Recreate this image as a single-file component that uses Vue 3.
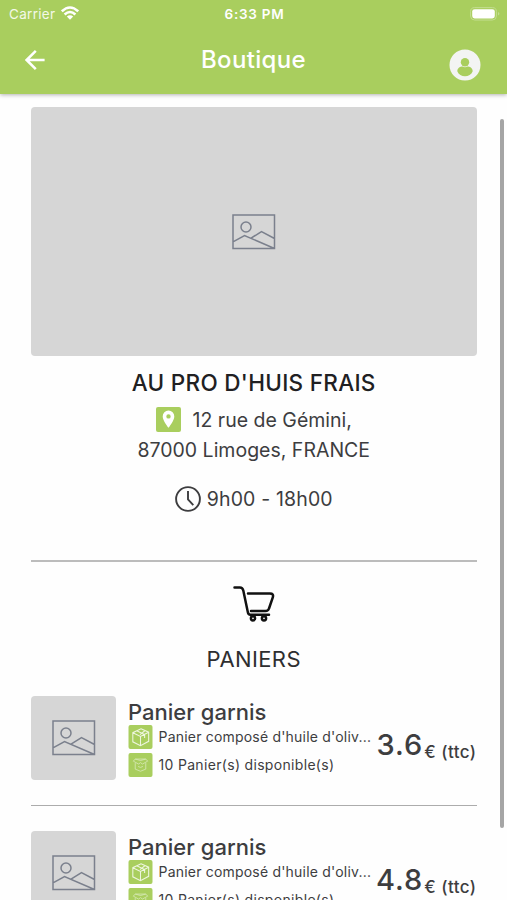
<script setup>
const baskets = [
  { id: 1, name: 'Panier garnis', description: "Panier composé d'huile d'oliv...", stock: 10, price: '3.6' },
  { id: 2, name: 'Panier garnis', description: "Panier composé d'huile d'oliv...", stock: 10, price: '4.8' },
]
</script>

<template>
  <div class="screen">
    <header class="header">
      <div class="status">
        <div class="carrier">
          <span>Carrier</span>
          <svg class="wifi" viewBox="0 0 18 14">
            <path d="M.8 5.400Q9-2.400 17.200 5.400M3.600 8.500Q9 3.500 14.400 8.500" fill="none" stroke="#fff" stroke-width="2.600" />
            <path d="M9 13.800L5.800 10.600Q9 8 12.200 10.600Z" fill="#fff" />
          </svg>
        </div>
        <span class="time">6:33 PM</span>
        <div class="battery">
          <svg viewBox="0 0 30 14">
            <rect x="0.6" y="0.6" width="25.8" height="12.4" rx="4" fill="none" stroke="#c3dd90" stroke-width="1" />
            <rect x="2.2" y="2.2" width="22.6" height="9.2" rx="2.4" fill="#fff" />
            <path d="M28 5v3.600q1.400-.6 1.400-1.800T28 5z" fill="#c3dd90" />
          </svg>
        </div>
      </div>
      <div class="bar">
        <svg class="back" viewBox="0 0 20 20">
          <path d="M19.600 10H1.800M10.800 .9L1.600 10l9.200 9.100" fill="none" stroke="#fff" stroke-width="2.500" />
        </svg>
        <h1 class="title">Boutique</h1>
        <svg class="account" viewBox="0 0 32 32">
          <circle cx="16" cy="16" r="15.500" fill="#f3f4f3" />
          <circle cx="16" cy="13.200" r="4.200" fill="#a9ce5e" />
          <path d="M8.300 22.200c0-3.200 3.200-4.600 5.200-4.600 1.600 1 3.400 1 5 0 2 0 5.200 1.400 5.200 4.600-1.200 3.400-4.400 5-7.700 5s-6.500-1.600-7.700-5z" fill="#a9ce5e" />
        </svg>
      </div>
    </header>

    <main class="content">
      <div class="photo">
        <svg class="image-icon" viewBox="0 0 44 36">
          <path d="M1 1h41.500v33.500H1zM1 27.800l11.500-6.300 30 13M19 24.200L29.500 17.500l13 7" />
          <circle cx="14" cy="13" r="5" />
        </svg>
      </div>

      <h2 class="shop">AU PRO D'HUIS FRAIS</h2>
      <div class="address">
        <div class="address-line">
          <svg class="pin" viewBox="0 0 25 25">
            <rect width="25" height="25" rx="2" fill="#a9ce5e" />
            <path fill-rule="evenodd" d="M12.500 3.500a5.800 5.800 0 0 0-5.800 5.900c0 4.300 5.800 11.300 5.800 11.300s5.800-7 5.800-11.300a5.800 5.800 0 0 0-5.800-5.900zm0 3.700a2.200 2.200 0 1 1 0 4.400 2.200 2.200 0 0 1 0-4.400z" fill="#fff" />
          </svg>
          <span>12 rue de Gémini,</span>
        </div>
        <div class="city">87000 Limoges, FRANCE</div>
      </div>
      <div class="hours">
        <svg class="clock" viewBox="0 0 26 26">
          <circle cx="13" cy="13" r="11.900" />
          <path d="M13 5v8.500l5.300 5.700" />
        </svg>
        <span>9h00 - 18h00</span>
      </div>

      <section class="section">
        <svg class="cart" viewBox="0 0 42 36">
          <path d="M1.500 1.500H7q2.500 0 3.300 3l4.500 21.500q.5 2.800 2.500 2.800H36M15 7.500h22q4 0 2.800 3.800L36 22.500q-.8 2.600-3.500 2.600H18" />
          <circle cx="20" cy="32.300" r="2.100" />
          <circle cx="31" cy="32.300" r="2.100" />
        </svg>
        <h3 class="section-title">PANIERS</h3>
      </section>

      <article v-for="b in baskets" :key="b.id" class="basket">
        <div class="thumb">
          <svg class="image-icon" viewBox="0 0 44 36">
            <path d="M1 1h41.500v33.500H1zM1 27.800l11.500-6.300 30 13M19 24.200L29.500 17.500l13 7" />
            <circle cx="14" cy="13" r="5" />
          </svg>
        </div>
        <div class="info">
          <div class="name">{{ b.name }}</div>
          <div class="detail">
            <svg class="tile" viewBox="0 0 25 25">
              <rect class="tile-bg" width="25" height="25" rx="2" />
              <path d="M13 4l8 3.500v9.500l-8.500 4.500-8-4v-9.500zM4.500 8l8 4 8.500-4.500M12.500 12v9.500M8.500 6l8.300 4v3.500M12 10l5-4" />
            </svg>
            <span class="desc">{{ b.description }}</span>
          </div>
          <div class="detail">
            <svg class="tile faint" viewBox="0 0 25 25">
              <rect class="tile-bg" width="25" height="25" rx="2" />
              <path d="M7 10.500v6.300l5.500 2.200 5.500-2.200v-6.300M5 8.500l2-2.200 5.500 1.500L18 6.300l2 2.200-5.500 3-2-1.500-2 1.500zM7 6.300h11M10 14l2.500 1 2.500-1" />
            </svg>
            <span class="stock">{{ b.stock }} Panier(s) disponible(s)</span>
          </div>
        </div>
        <div class="price">
          <span class="amount">{{ b.price }}</span><span class="unit">€ (ttc)</span>
        </div>
      </article>
    </main>
    <div class="scrollbar"></div>
  </div>
</template>

<style>
html,
body {
  overflow: hidden;
  background: #fff;
}
</style>

<style scoped>
.screen {
  position: relative;
  width: 507px;
  height: 900px;
  overflow: hidden;
  background: #fefefe;
  color: #3d3d3f;
  font-family: Inter, "Liberation Sans", sans-serif;
}
.screen span,
.screen .city,
.screen .name {
  white-space: nowrap;
}
svg {
  display: block;
  flex: none;
}
h1,
h2,
h3 {
  margin: 0;
}
.header {
  position: relative;
  height: 94px;
  background: #a9ce5e;
  color: #fff;
  box-shadow: 0 1px 4px rgba(0, 0, 0, 0.3);
}
.status {
  display: grid;
  grid-template-columns: 1fr auto 1fr;
  align-items: center;
  height: 27px;
  padding: 0 7px 0 9px;
}
.carrier {
  display: flex;
  gap: 6px;
  font-size: 13.5px;
  letter-spacing: 0.3px;
  color: #f3f9e8;
}
.wifi {
  width: 18px;
  height: 14px;
}
.time {
  font-size: 13.5px;
  font-weight: 600;
  letter-spacing: 0.75px;
}
.battery {
  display: flex;
  justify-content: flex-end;
}
.battery svg {
  width: 30px;
  height: 14px;
}
.bar {
  display: grid;
  grid-template-columns: 1fr auto 1fr;
  align-items: center;
  height: 66px;
  padding: 0 26px 0 25px;
}
.back {
  width: 20px;
  height: 20px;
}
.title {
  padding-left: 1px;
  font-size: 24px;
  font-weight: 500;
  line-height: 30px;
  letter-spacing: 0.35px;
}
.account {
  width: 32px;
  height: 32px;
  margin-top: 9px;
  justify-self: end;
}
.content {
  padding: 12.5px 30.5px 0 31px;
}
.photo,
.thumb {
  display: flex;
  align-items: center;
  justify-content: center;
  background: #d6d6d6;
  border-radius: 4px;
}
.photo {
  height: 249.8px;
}
.image-icon {
  width: 44px;
  height: 36px;
  fill: none;
  stroke: #7b808d;
  stroke-width: 1.5;
}
.photo .image-icon {
  margin-top: 1px;
}
.shop {
  margin-top: 11.7px;
  text-align: center;
  color: #202022;
  font-size: 22.5px;
  font-weight: 500;
  line-height: 30px;
  letter-spacing: 0.3px;
}
.address {
  margin-top: 7px;
  font-size: 19.5px;
  line-height: 30px;
  letter-spacing: 0;
}
.address-line {
  display: flex;
  align-items: center;
  justify-content: center;
  gap: 12px;
}
.pin {
  width: 25px;
  height: 25px;
}
.city {
  text-align: center;
}
.hours {
  display: flex;
  align-items: center;
  justify-content: center;
  gap: 6px;
  height: 30px;
  margin-top: 19px;
  font-size: 19.5px;
  letter-spacing: 0.15px;
}
.clock {
  width: 26px;
  height: 26px;
  fill: none;
  stroke: #3d3d3f;
  stroke-width: 1.9;
}
.section {
  display: flex;
  flex-direction: column;
  align-items: center;
  height: 110.3px;
  margin-top: 46px;
  padding-top: 24px;
  border-top: 2px solid #bcbcbc;
}
.cart {
  width: 42px;
  height: 36px;
  fill: none;
  stroke: #111;
  stroke-width: 2.5;
  stroke-linecap: round;
}
.section-title {
  margin-top: 22px;
  color: #2e2e30;
  font-size: 22px;
  font-weight: 400;
  line-height: 30px;
  letter-spacing: 0.4px;
}
.basket {
  display: flex;
  height: 109px;
}
.basket + .basket {
  padding-top: 24.5px;
  border-top: 1.5px solid #acacac;
}
.thumb {
  flex: none;
  width: 85px;
  height: 84px;
}
.info {
  width: 245px;
  margin-left: 12px;
}
.name {
  height: 29px;
  padding-top: 1px;
  font-size: 22px;
  line-height: 30px;
  font-weight: 500;
  letter-spacing: 0.02px;
  box-sizing: border-box;
}
.detail {
  display: flex;
  align-items: center;
  gap: 5.5px;
  height: 24px;
  margin-bottom: 4px;
  font-size: 14px;
  line-height: 16px;
}
.desc {
  letter-spacing: 0.2px;
}
.stock {
  letter-spacing: 0.32px;
}
.tile {
  width: 25px;
  height: 24px;
  fill: none;
  stroke: #eef6df;
  stroke-width: 1.1;
}
.tile-bg {
  fill: #a9ce5e;
  stroke: none;
}
.faint {
  stroke: #d5e8b3;
  stroke-width: 0.9;
}
.price {
  display: flex;
  align-items: baseline;
  gap: 1px;
  margin-left: auto;
  padding-top: 31px;
  line-height: 36px;
  height: 36px;
}
.amount {
  font-size: 29px;
  font-weight: 500;
  letter-spacing: 1px;
}
.unit {
  position: relative;
  top: 3px;
  font-size: 17px;
  font-weight: 500;
  letter-spacing: 0.45px;
}
.scrollbar {
  position: absolute;
  top: 119px;
  right: 3px;
  width: 4px;
  height: 709px;
  border-radius: 2px;
  background: #a5a5a5;
}
</style>
